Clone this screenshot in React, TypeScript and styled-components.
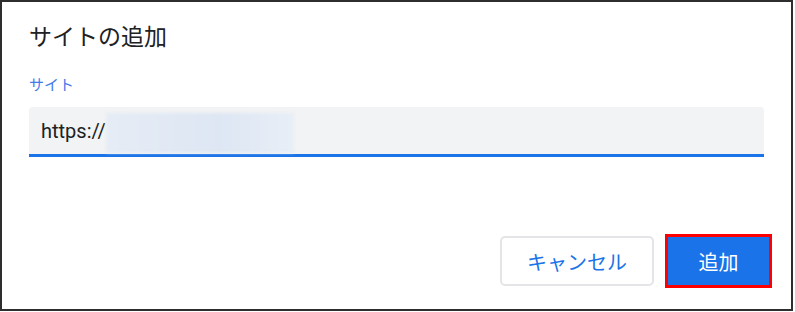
import React from "react";
import styled, { createGlobalStyle } from "styled-components";

const GlobalStyle = createGlobalStyle`
  html, body {
    margin: 0;
    padding: 0;
    background: #fff;
  }
  body {
    font-family: Roboto, "Noto Sans CJK JP", "Noto Sans", sans-serif;
  }
`;

const Frame = styled.div`
  box-sizing: border-box;
  width: 793px;
  height: 311px;
  border: 2px solid #2e2e2e;
  background: #fff;
  display: flex;
  flex-direction: column;
  padding: 21px 19px 21px 27px;
`;

const Title = styled.h1`
  margin: 0;
  font-size: 23px;
  line-height: 30px;
  font-weight: 400;
  color: #202124;
`;

const Field = styled.div`
  margin: 23px 8px 0 0;
  display: flex;
  flex-direction: column;
`;

const Label = styled.label`
  font-size: 15px;
  line-height: 19px;
  color: #4479e8;
  margin-bottom: 12px;
`;

const InputBox = styled.div`
  box-sizing: border-box;
  height: 50px;
  background: #f1f3f4;
  border-radius: 4px 4px 0 0;
  border-bottom: 3px solid #1a73e8;
  display: flex;
  align-items: center;
  padding: 0 12px;
  font-size: 20px;
  color: #202124;
`;

const Redacted = styled.span`
  display: inline-block;
  width: 188px;
  height: 40px;
  margin-top: 4px;
  background: linear-gradient(90deg, #e6ecf5, #dde6f3 60%, #e8eef6);
  filter: blur(1.5px);
`;

const Footer = styled.div`
  margin-top: auto;
  display: flex;
  justify-content: flex-end;
  align-items: center;
  gap: 11px;
`;

const Button = styled.button<{ $primary?: boolean }>`
  box-sizing: border-box;
  font-family: inherit;
  font-size: 20px;
  cursor: pointer;
  border-radius: ${(p) => (p.$primary ? "0" : "5px")};
  width: ${(p) => (p.$primary ? "107px" : "154px")};
  height: ${(p) => (p.$primary ? "54px" : "50px")};
  color: ${(p) => (p.$primary ? "#fff" : "#1a73e8")};
  background: ${(p) => (p.$primary ? "#1a73e8" : "#fff")};
  border: ${(p) => (p.$primary ? "3px solid #ff0000" : "2px solid #e3e5e8")};
  padding: 0;
`;

const App = () => {
  return (
    <>
      <GlobalStyle />
      <Frame>
        <Title>サイトの追加</Title>
        <Field>
          <Label>サイト</Label>
          <InputBox>
            https://
            <Redacted />
          </InputBox>
        </Field>
        <Footer>
          <Button>キャンセル</Button>
          <Button $primary>追加</Button>
        </Footer>
      </Frame>
    </>
  );
};

export default App;
